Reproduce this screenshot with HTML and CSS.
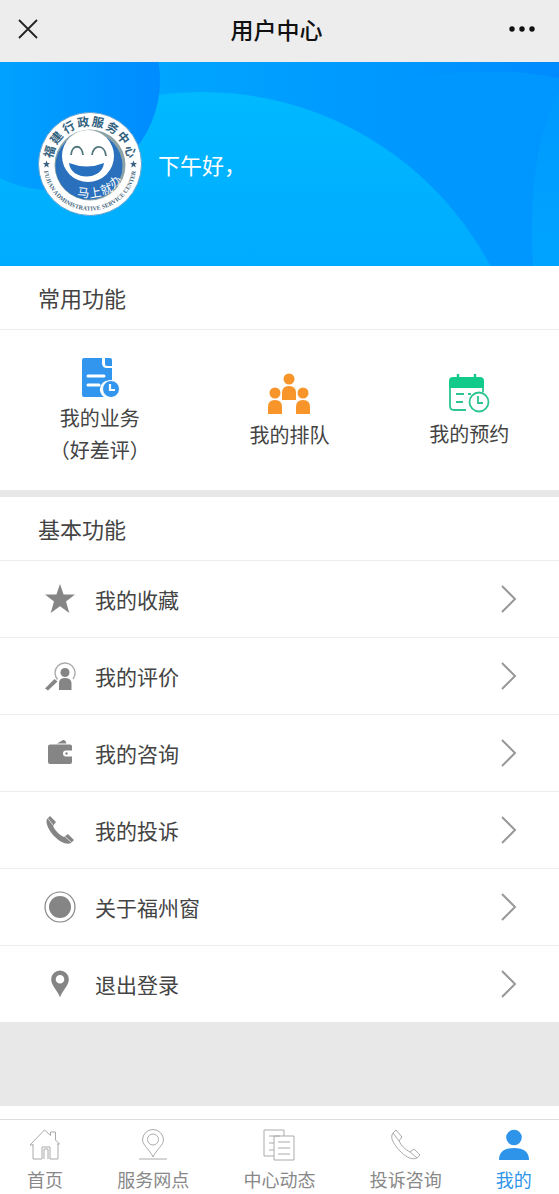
FILE: index.html
```html
<!DOCTYPE html>
<html lang="zh-CN">

<head>
    <meta charset="UTF-8">
    <meta name="viewport" content="width=device-width, initial-scale=1.0">
    <title>用户中心</title>
    <link rel="stylesheet" href="styles.css">
</head>

<body>
    <header class="navbar">
        <button type="button" class="nav-btn" aria-label="关闭">
            <svg width="22" height="22" viewBox="0 0 22 22"><path d="M2 2l18 18M20 2L2 20" fill="none" stroke="#222" stroke-width="1.8"/></svg>
        </button>
        <h1>用户中心</h1>
        <button type="button" class="nav-btn" aria-label="更多">
            <svg width="28" height="22" viewBox="0 0 28 22" fill="#111"><circle cx="4" cy="11" r="2.7"/><circle cx="14" cy="11" r="2.7"/><circle cx="24" cy="11" r="2.7"/></svg>
        </button>
    </header>

    <main>
        <section class="banner">
            <svg class="banner-bg" viewBox="0 0 559 204" preserveAspectRatio="none" aria-hidden="true">
                <defs>
                    <linearGradient id="sky" x1="0" y1="0" x2="1" y2="0">
                        <stop offset="0" stop-color="#00b2ff"/>
                        <stop offset=".3" stop-color="#00a5ff"/>
                        <stop offset=".65" stop-color="#0099ff"/>
                        <stop offset="1" stop-color="#0096ff"/>
                    </linearGradient>
                    <linearGradient id="ball" x1="0" y1="0" x2="1" y2="0">
                        <stop offset="0" stop-color="#00aaff"/>
                        <stop offset=".55" stop-color="#0099ff"/>
                        <stop offset="1" stop-color="#008cff"/>
                    </linearGradient>
                    <linearGradient id="hill" x1="0" y1="0" x2="0" y2="204" gradientUnits="userSpaceOnUse">
                        <stop offset=".15" stop-color="#00b9ff"/>
                        <stop offset="1" stop-color="#00abff"/>
                    </linearGradient>
                    <linearGradient id="corner" x1="0" y1="0" x2="1" y2="0">
                        <stop offset="0" stop-color="#0090ff" stop-opacity="0"/>
                        <stop offset="1" stop-color="#008aff"/>
                    </linearGradient>
                    <linearGradient id="edge" x1="0" y1="0" x2="0" y2="1">
                        <stop offset="0" stop-color="#0099ff"/>
                        <stop offset="1" stop-color="#00a4ff"/>
                    </linearGradient>
                </defs>
                <rect width="559" height="204" fill="url(#sky)"/>
                <path d="M380 0H559V16Q490 2 400 18Z" fill="url(#corner)"/>
                <circle cx="202" cy="356" r="326" fill="url(#hill)"/>
                <circle cx="50" cy="18" r="110" fill="url(#ball)"/>
                <path d="M559 30C536 75 529 130 533 204H559Z" fill="url(#edge)"/>
            </svg>
            <svg class="avatar" viewBox="0 0 104 104" role="img" aria-label="福建行政服务中心">
                <defs>
                    <path id="ring" d="M5.500 52a46.500 46.500 0 0 0 93 0"/>
                </defs>
                <circle cx="52" cy="52" r="51.500" fill="#fff" stroke="#5fa3d0" stroke-width="1"/>
                <circle cx="52" cy="53" r="35.500" fill="#8ca3a6"/>
                <circle cx="51" cy="54" r="33.500" fill="#2a70bd"/>
                <circle cx="50" cy="44" r="26" fill="#fff"/>
                <path d="M33 43c1-11 11-11 12 0M54 43c1-11 13-11 14 1" fill="none" stroke="#53777e" stroke-width="1.800"/>
                <path d="M31 51q18 7 35 0c-2 18-33 18-35 0z" fill="#2770c0"/>
                <g class="seal-text">
                    <text x="52" y="14" transform="rotate(-73 52 52)">福</text>
                    <text x="52" y="14" transform="rotate(-52 52 52)">建</text>
                    <text x="52" y="14" transform="rotate(-30 52 52)">行</text>
                    <text x="52" y="14" transform="rotate(-9 52 52)">政</text>
                    <text x="52" y="14" transform="rotate(11 52 52)">服</text>
                    <text x="52" y="14" transform="rotate(32 52 52)">务</text>
                    <text x="52" y="14" transform="rotate(52 52 52)">中</text>
                    <text x="52" y="14" transform="rotate(73 52 52)">心</text>
                </g>
                <g class="seal-motto">
                    <text x="45" y="85" transform="rotate(5 45 85)">马</text>
                    <text x="58" y="85" transform="rotate(-10 58 85)">上</text>
                    <text x="70" y="81" transform="rotate(-22 70 81)">就</text>
                    <text x="80" y="73" transform="rotate(-38 80 73)">办</text>
                </g>
                <text class="seal-latin"><textPath href="#ring" startOffset="50%">FUJIAN ADMINISTRATIVE SERVICE CENTER</textPath></text>
                <path id="star" d="M8.500 48.500l1 2.500h2.500l-2 1.700.8 2.800-2.300-1.600-2.300 1.600.8-2.800-2-1.700h2.500z" fill="#3b6283"/>
                <use href="#star" x="87"/>
            </svg>
            <p class="greeting">下午好，</p>
        </section>

        <section class="panel">
            <h2>常用功能</h2>
            <div class="quick">
                <a href="#">
                    <svg width="40" height="40" viewBox="0 0 40 40">
                        <path d="M4 0h18v5q0 5 5 5h5v13a9 9 0 0 0-8 16H4q-2 0-2-2V2q0-2 2-2z" fill="#3296ee"/>
                        <path d="M25 0h5q2 0 2 2v6h-5q-2 0-2-2z" fill="#3296ee"/>
                        <path d="M8 18h16M8 27h11" stroke="#fff" stroke-width="3" stroke-linecap="round"/>
                        <circle cx="31" cy="31" r="8.500" fill="#3296ee" stroke="#fff" stroke-width="1"/>
                        <path d="M30 26v6h5" fill="none" stroke="#fff" stroke-width="2.200"/>
                    </svg>
                    <span>我的业务</span>
                    <span>（好差评）</span>
                </a>
                <a href="#">
                    <svg width="44" height="42" viewBox="0 0 44 42" fill="#f7942a">
                        <circle cx="22" cy="6" r="5.500"/>
                        <path d="M15 27V20q0-7 7-7t7 7v7z"/>
                        <circle cx="8" cy="20" r="5.500"/>
                        <path d="M1 41V34q0-7 7-7t7 7v7z"/>
                        <circle cx="36" cy="20" r="5.500"/>
                        <path d="M29 41V34q0-7 7-7t7 7v7z"/>
                    </svg>
                    <span>我的排队</span>
                </a>
                <a href="#">
                    <svg width="42" height="40" viewBox="0 0 42 40" fill="none" stroke="#2cc58f" stroke-width="1.800">
                        <path d="M36 14V7q0-4-4-4H5Q1 3 1 7v7z" fill="#12ca89" stroke="none"/>
                        <path d="M10 0v6M27 0v6" stroke="#12ca89" stroke-width="2.400"/>
                        <path d="M2 13v19q0 4 4 4h12M35 13v5M8 20h8M8 28h7M20 20h3"/>
                        <circle cx="31" cy="28" r="9.500"/>
                        <path d="M30 22v7h5"/>
                    </svg>
                    <span>我的预约</span>
                </a>
            </div>
        </section>

        <section class="panel">
            <h2>基本功能</h2>
            <ul class="menu">
                <li><a href="#">
                    <svg class="menu-icon" viewBox="0 0 32 32"><path d="M16 1l3.600 10.500H31l-9 7L25.300 30 16 23.200 6.700 30 10 18.500l-9-7h11.400z" fill="#858585"/></svg>
                    <span>我的收藏</span>
                    <svg class="arrow" viewBox="0 0 16 28"><path d="M1 1l13 13L1 27"/></svg>
                </a></li>
                <li><a href="#">
                    <svg class="menu-icon" viewBox="0 0 32 32">
                        <path d="M13.500 19.500A10 10 0 1 1 29 19" fill="none" stroke="#aaa" stroke-width="1.400"/>
                        <path d="M1 28.500L10.500 19l3 2.500-9.500 9z" fill="#858585"/>
                        <circle cx="21" cy="12.500" r="4.500" fill="#858585"/>
                        <path d="M15 30v-7q0-5 6-5t6.500 5v7z" fill="#858585"/>
                    </svg>
                    <span>我的评价</span>
                    <svg class="arrow" viewBox="0 0 16 28"><path d="M1 1l13 13L1 27"/></svg>
                </a></li>
                <li><a href="#">
                    <svg class="menu-icon" viewBox="0 0 32 32" fill="#858585">
                        <path d="M13 6.500l6-3.500q2-.5 3 2l.5 1.500z"/>
                        <path d="M6 7.500h20q2 0 2 2v4h-6a3 3 0 0 0 0 6h6V25q0 2-2 2H6q-2 0-2-2V9.500q0-2 2-2z"/>
                        <circle cx="22.500" cy="16.500" r="1.200"/>
                    </svg>
                    <span>我的咨询</span>
                    <svg class="arrow" viewBox="0 0 16 28"><path d="M1 1l13 13L1 27"/></svg>
                </a></li>
                <li><a href="#">
                    <svg class="menu-icon" viewBox="0 0 32 32">
                        <path d="M6 2l6 6-3 4c2 4 6 9 11 11l4-3 6 6-3 3c-4 2-10 0-16-6S1 9 3 5z" fill="#858585"/>
                        <path d="M4 4.500l5 6.500M21 22.500l6.500 6" stroke="#fff" stroke-width=".7"/>
                    </svg>
                    <span>我的投诉</span>
                    <svg class="arrow" viewBox="0 0 16 28"><path d="M1 1l13 13L1 27"/></svg>
                </a></li>
                <li><a href="#">
                    <svg class="menu-icon" viewBox="0 0 32 32"><circle cx="16" cy="16" r="15" fill="none" stroke="#858585" stroke-width="1.200"/><circle cx="16" cy="16" r="11" fill="#858585"/></svg>
                    <span>关于福州窗</span>
                    <svg class="arrow" viewBox="0 0 16 28"><path d="M1 1l13 13L1 27"/></svg>
                </a></li>
                <li><a href="#">
                    <svg class="menu-icon" viewBox="0 0 32 32"><path d="M16 2.500a8.800 8.800 0 0 1 8.800 8.800C24.800 18 18.500 22 16 29.500 13.500 22 7.200 18 7.200 11.300A8.800 8.800 0 0 1 16 2.500zm0 4.500a4.300 4.300 0 1 0 0 8.600 4.300 4.300 0 0 0 0-8.600z" fill="#858585"/></svg>
                    <span>退出登录</span>
                    <svg class="arrow" viewBox="0 0 16 28"><path d="M1 1l13 13L1 27"/></svg>
                </a></li>
            </ul>
        </section>
    </main>

    <footer class="footer">
        <nav class="tabbar">
            <a href="#">
                <svg class="tab-icon" viewBox="0 0 32 32"><path d="M4 15v15h9V18h8v12h8V15M1 16L15.500 1l6 5.500V3h5v8l4 4H28M1 16h3M15 30V20h4v10"/></svg>
                <span>首页</span>
            </a>
            <a href="#">
                <svg class="tab-icon" viewBox="0 0 32 32"><path d="M16 28C13 21 5.500 16 5.500 11a10.500 10.500 0 0 1 21 0C26.500 16 19 21 16 28zM2 30h28"/><circle cx="16" cy="10.500" r="5.500"/></svg>
                <span>服务网点</span>
            </a>
            <a href="#">
                <svg class="tab-icon" viewBox="0 0 32 32"><path d="M11 27H1V1h20v6M6 7h11M6 14h5M6 21h5M11 7h20v24H11zM15 13h12M15 19h12M15 25h12"/></svg>
                <span>中心动态</span>
            </a>
            <a href="#">
                <svg class="tab-icon" viewBox="0 0 32 32"><path d="M6 1l6 7-3 4c2 4 6 9 11 11l4-3 6 6-3 3c-4 2-10 0-16-6S-1 9 3 4zM3 4l6 8M20 23l7 6"/></svg>
                <span>投诉咨询</span>
            </a>
            <a href="#" class="active">
                <svg class="tab-icon" viewBox="0 0 32 32"><circle cx="16" cy="8.500" r="7.800"/><path d="M1 31c0-8 5-12 15-12s15 4 15 12z"/></svg>
                <span>我的</span>
            </a>
        </nav>
    </footer>
</body>

</html>
```

FILE: styles.css
```css
* {
    box-sizing: border-box;
    margin: 0;
    padding: 0;
}

body {
    min-height: 100vh;
    display: flex;
    flex-direction: column;
    background: #e8e8e8;
    color: #444;
    font-family: "Noto Sans CJK SC", sans-serif;
}

main {
    flex: 1;
}

a {
    color: inherit;
    text-decoration: none;
}

svg {
    display: block;
    flex-shrink: 0;
}

.navbar {
    display: grid;
    grid-template-columns: 1fr auto 1fr;
    align-items: center;
    height: 62px;
    padding: 0 23px 4px 17px;
    background: #ededed;
}

.navbar h1 {
    font-size: 23px;
    font-weight: 500;
    line-height: 36px;
    color: #111;
}

.nav-btn {
    justify-self: start;
    border: 0;
    background: none;
    cursor: pointer;
}

.nav-btn:last-child {
    justify-self: end;
}

.banner {
    position: relative;
    display: flex;
    align-items: center;
    gap: 16px;
    padding: 50px 38px;
    color: #fff;
}

.banner-bg {
    position: absolute;
    inset: 0;
    width: 100%;
    height: 100%;
}

.avatar {
    position: relative;
    width: 104px;
    height: 104px;
}

.seal-text {
    font-family: "Noto Sans CJK SC", serif;
    font-size: 12px;
    font-weight: 700;
    text-anchor: middle;
    fill: #33637f;
}

.seal-motto {
    font-size: 12px;
    text-anchor: middle;
    fill: #fff;
}

.seal-latin {
    font-family: "Liberation Serif", serif;
    font-size: 6px;
    font-weight: 700;
    text-anchor: middle;
    fill: #45677c;
}

.greeting {
    position: relative;
    font-size: 22px;
    line-height: 32px;
}

.panel {
    margin-bottom: 7px;
    background: #fff;
}

.panel h2 {
    padding: 15px 38px 16px;
    border-bottom: 1px solid #ececec;
    font-size: 22px;
    font-weight: 400;
    line-height: 32px;
}

.quick {
    display: flex;
    align-items: center;
    justify-content: space-around;
    padding: 28px 0 24px;
}

.quick a {
    display: flex;
    flex-direction: column;
    align-items: center;
    font-size: 20px;
    line-height: 32px;
}

.quick svg {
    margin-bottom: 4px;
}

.menu {
    list-style: none;
}

.menu li {
    border-bottom: 1px solid #ececec;
}

.menu li:last-child {
    border-bottom: 0;
}

.menu a {
    display: flex;
    align-items: center;
    padding: 22px 42px 22px 44px;
    font-size: 21px;
    line-height: 32px;
}

.menu-icon {
    width: 32px;
    height: 32px;
    margin-right: 19px;
}

.arrow {
    width: 16px;
    height: 28px;
    margin-left: auto;
    fill: none;
    stroke: #999;
    stroke-width: 2;
}

.footer {
    padding-top: 13px;
    background: #fff;
}

.tabbar {
    display: flex;
    justify-content: space-around;
    padding: 9px 0 2px;
    border-top: 1px solid #ddd;
    font-size: 18px;
    line-height: 26px;
    color: #888;
}

.tabbar a {
    display: flex;
    flex-direction: column;
    align-items: center;
    gap: 5px;
}

.tab-icon {
    width: 32px;
    height: 32px;
    fill: none;
    stroke: #aaa;
    stroke-width: 1;
}

.tabbar .active {
    color: #2d94ea;
}

.active .tab-icon {
    fill: #2d94ea;
    stroke: none;
}
```
